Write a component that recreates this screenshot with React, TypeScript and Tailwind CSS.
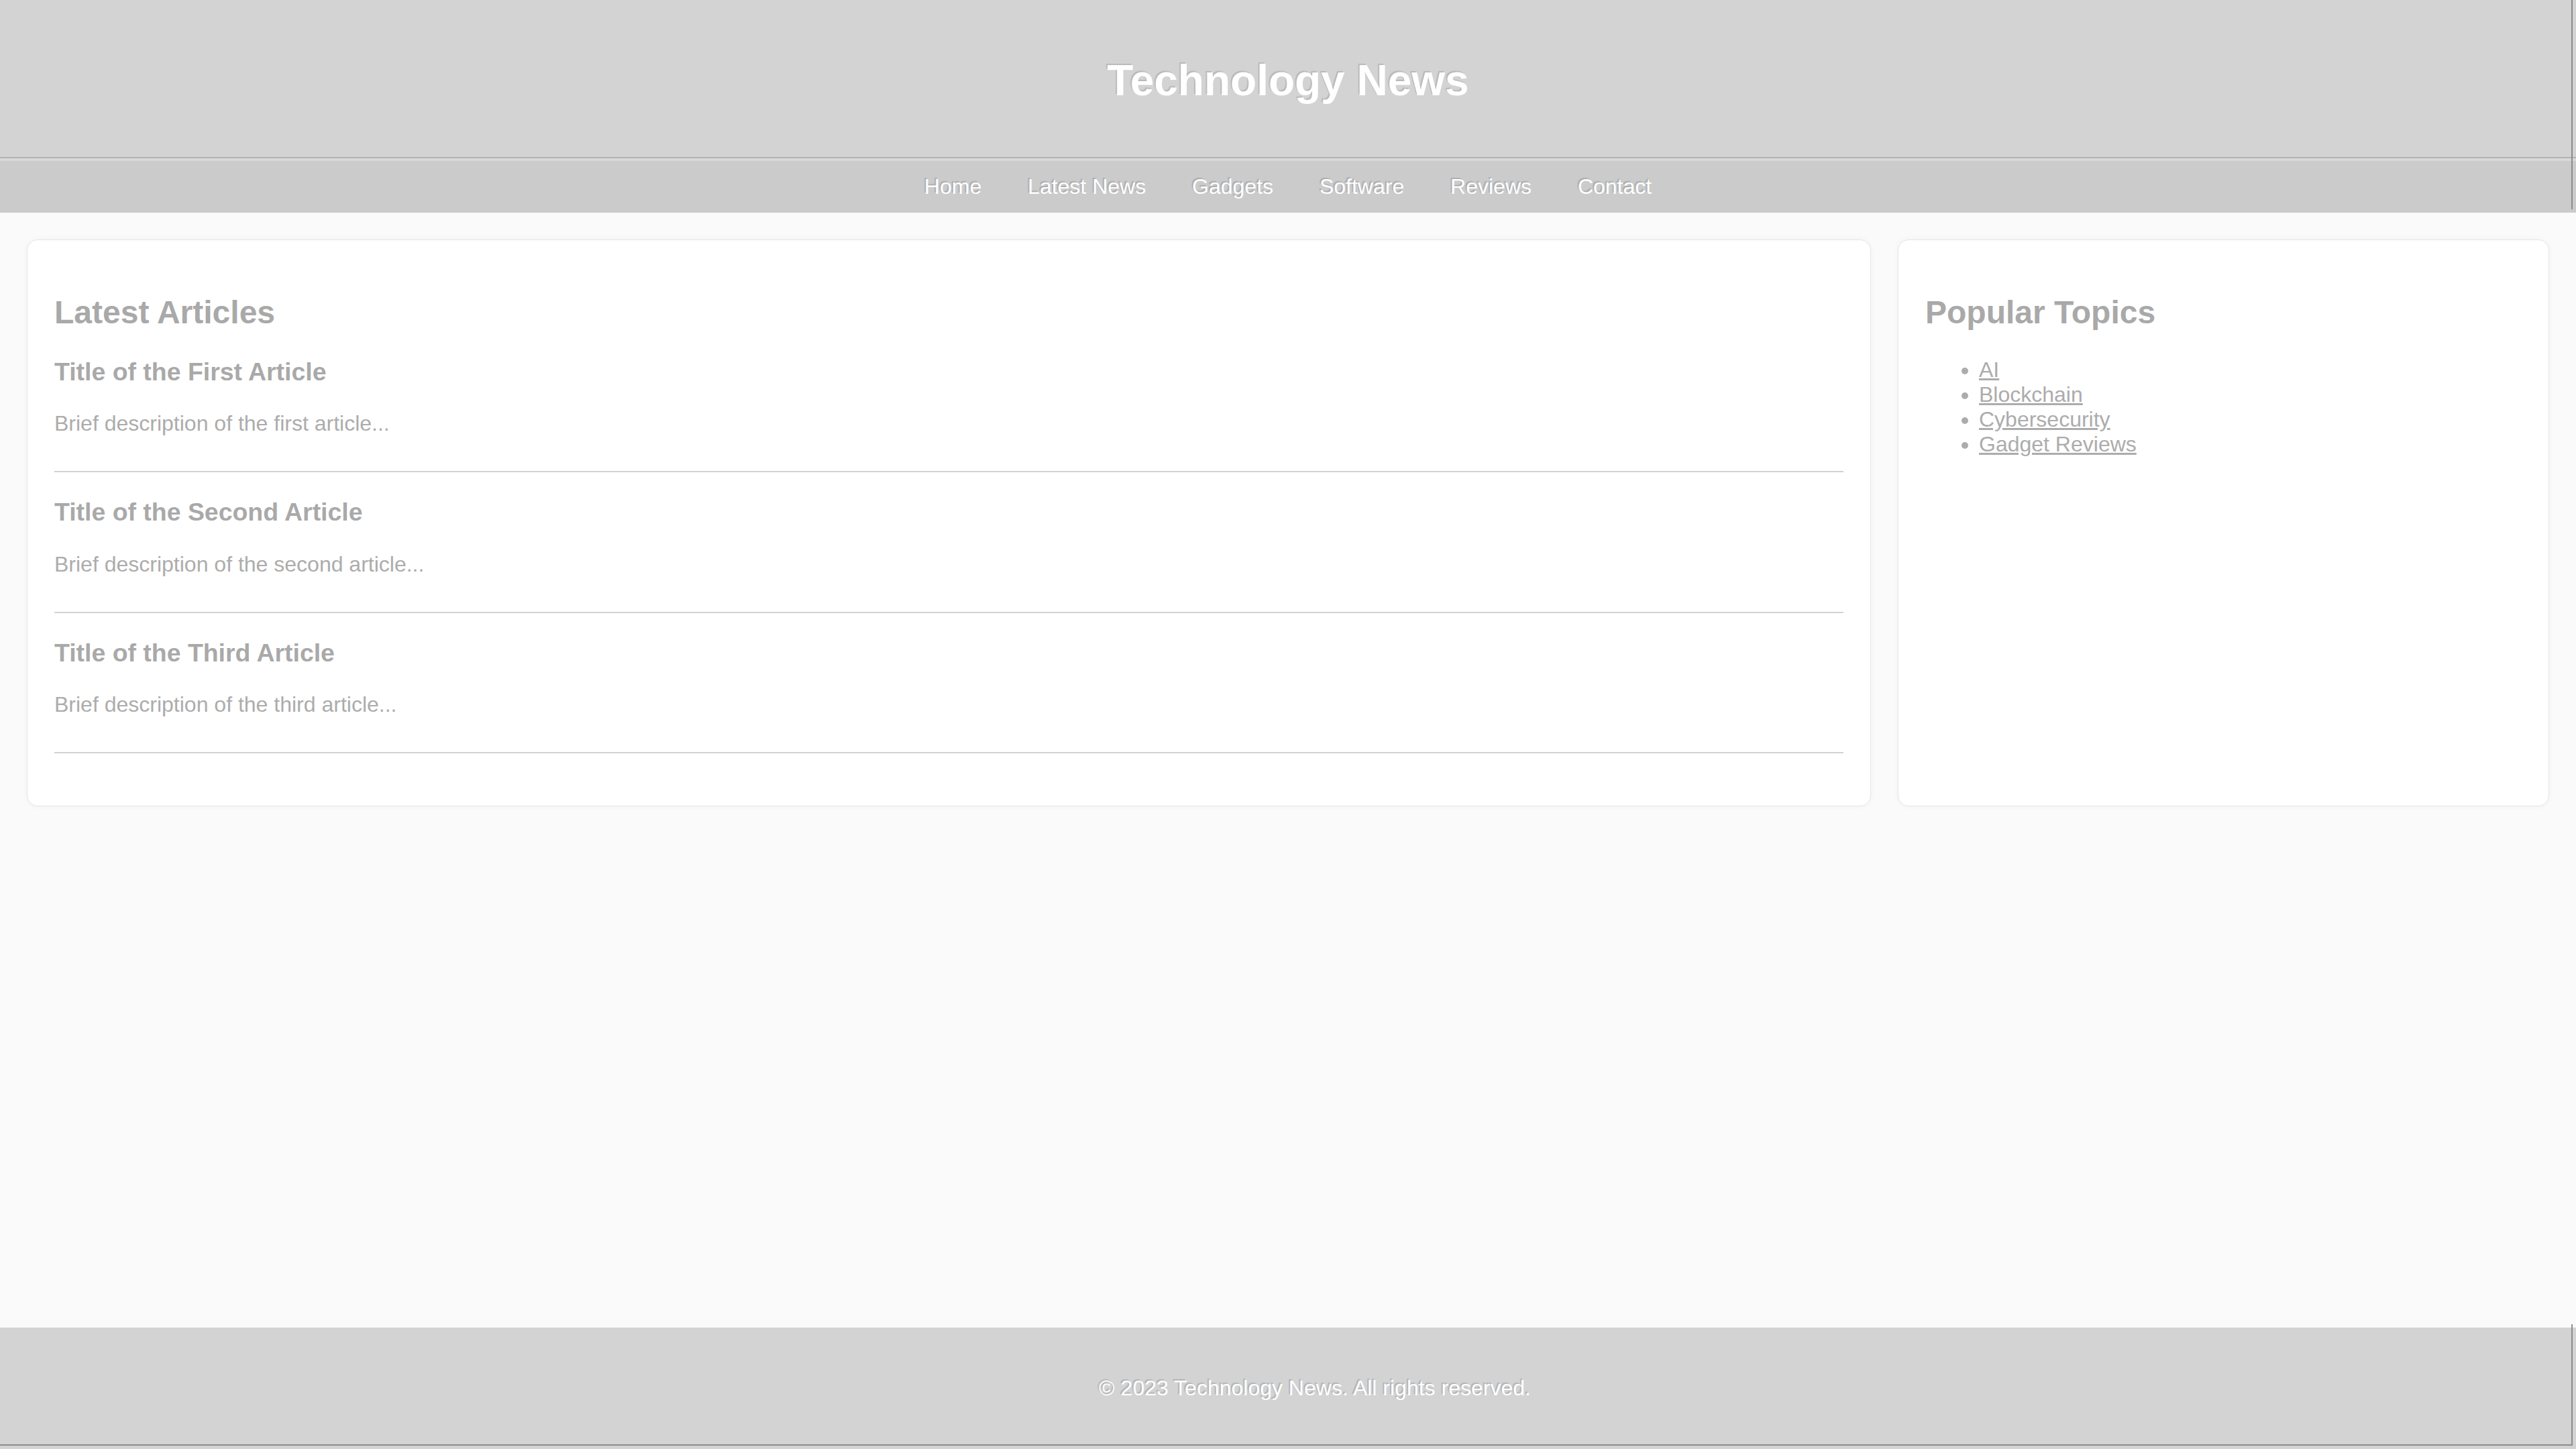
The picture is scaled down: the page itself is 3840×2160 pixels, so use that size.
import React from "react";

const articles = [
  { title: "Title of the First Article", desc: "Brief description of the first article..." },
  { title: "Title of the Second Article", desc: "Brief description of the second article..." },
  { title: "Title of the Third Article", desc: "Brief description of the third article..." },
];

const navLinks = ["Home", "Latest News", "Gadgets", "Software", "Reviews", "Contact"];
const topics = ["AI", "Blockchain", "Cybersecurity", "Gadget Reviews"];

export default function App() {
  return (
    <div
      className="relative min-h-[2160px] w-full flex flex-col bg-[#fafafa] overflow-hidden"
      style={{ fontFamily: '"Liberation Sans", Arial, sans-serif' }}
    >
      <header className="bg-[#d3d3d3] pt-[40px] pb-[34px] text-center">
        <h1 className="my-[43px] text-[64px] leading-[74px] font-bold text-white [text-shadow:-2px_-2px_1px_rgba(0,0,0,0.12)]">
          Technology News
        </h1>
      </header>
      <div className="h-[2px] bg-[#b2b2b2]" />
      <div className="h-[4px] bg-[#d8d8d8]" />
      <nav className="bg-[#cbcbcb] py-[20px] text-center text-[32px] leading-[37px]">
        {navLinks.map((l, i) => (
          <React.Fragment key={l}>
            {i > 0 ? " " : null}
            <a href="#" className="mx-[30px] text-white no-underline [text-shadow:-2px_-2px_1px_rgba(0,0,0,0.15)]">
              {l}
            </a>
          </React.Fragment>
        ))}
      </nav>
      <main className="flex gap-[40px] p-[40px]">
        <section className="flex-[3_1_0%] rounded-[16px] border border-[#e6e6e6] bg-white px-[40px] py-[40px] shadow-[0_0_10px_rgba(0,0,0,0.04)]">
          <h2 className="mt-[40px] mb-[40px] text-[48px] leading-[55px] font-bold text-[#a9a9a9]">Latest Articles</h2>
          {articles.map((a) => (
            <article key={a.title} className="mb-[38px] pb-[20px] border-b-2 border-[#d2d2d2]">
              <h3 className="my-[37.44px] text-[37.44px] leading-[43px] font-bold text-[#a9a9a9]">{a.title}</h3>
              <p className="my-[32px] text-[32px] leading-[37px] text-[#acacac]">{a.desc}</p>
            </article>
          ))}
        </section>
        <aside className="flex-[1_1_0%] rounded-[16px] border border-[#e6e6e6] bg-white px-[40px] py-[40px] shadow-[0_0_10px_rgba(0,0,0,0.04)]">
          <h2 className="mt-[40px] mb-[40px] text-[48px] leading-[55px] font-bold text-[#a9a9a9]">Popular Topics</h2>
          <ul className="my-[32px] pl-[80px] list-disc text-[32px] leading-[37px] text-[#acacac]">
            {topics.map((t) => (
              <li key={t}>
                <a href="#" className="underline text-[#acacac]">
                  {t}
                </a>
              </li>
            ))}
          </ul>
        </aside>
      </main>
      <footer className="mt-auto bg-[#d3d3d3] pt-[40px] pb-[40px] pl-[80px] text-center">
        <p className="my-[32px] text-[32px] leading-[37px] text-white [text-shadow:-2px_-2px_1px_rgba(0,0,0,0.15)]">
          © 2023 Technology News. All rights reserved.
        </p>
      </footer>
      <div className="absolute right-[5px] top-0 h-[312px] w-[2px] bg-[#8c8c8c]" />
      <div className="absolute right-[5px] bottom-[5px] h-[181px] w-[2px] bg-[#8c8c8c]" />
      <div className="absolute left-0 right-[5px] bottom-[5px] h-[2px] bg-[#8c8c8c]" />
    </div>
  );
}
